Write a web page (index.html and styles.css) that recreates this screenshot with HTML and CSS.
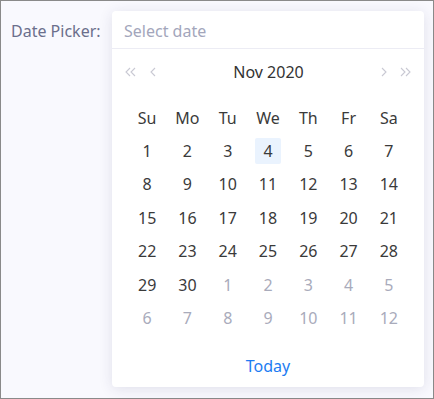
FILE: index.html
```html
<!DOCTYPE html>
<html lang="en">
<head>
  <meta charset="UTF-8">
  <title>Date Picker</title>
  <link rel="stylesheet" href="styles.css">
</head>
<body>
  <div class="frame">
    <label class="field-label">Date Picker:</label>

    <div class="picker">
      <div class="picker-input">Select date</div>

      <div class="picker-header">
        <div class="nav">
          <svg width="12" height="10" viewBox="0 0 12 10"><path d="M5 1 L1 5 L5 9 M10 1 L6 5 L10 9" /></svg>
          <svg width="6" height="10" viewBox="0 0 6 10"><path d="M5 1 L1 5 L5 9" /></svg>
        </div>
        <span class="month">Nov 2020</span>
        <div class="nav">
          <svg width="6" height="10" viewBox="0 0 6 10"><path d="M1 1 L5 5 L1 9" /></svg>
          <svg width="12" height="10" viewBox="0 0 12 10"><path d="M1 1 L5 5 L1 9 M6 1 L10 5 L6 9" /></svg>
        </div>
      </div>

      <div class="days">
        <span class="wd">Su</span><span class="wd">Mo</span><span class="wd">Tu</span><span class="wd">We</span><span class="wd">Th</span><span class="wd">Fr</span><span class="wd">Sa</span>
        <span>1</span><span>2</span><span>3</span><span class="today"><b>4</b></span><span>5</span><span>6</span><span>7</span>
        <span>8</span><span>9</span><span>10</span><span>11</span><span>12</span><span>13</span><span>14</span>
        <span>15</span><span>16</span><span>17</span><span>18</span><span>19</span><span>20</span><span>21</span>
        <span>22</span><span>23</span><span>24</span><span>25</span><span>26</span><span>27</span><span>28</span>
        <span>29</span><span>30</span><span class="other">1</span><span class="other">2</span><span class="other">3</span><span class="other">4</span><span class="other">5</span>
        <span class="other">6</span><span class="other">7</span><span class="other">8</span><span class="other">9</span><span class="other">10</span><span class="other">11</span><span class="other">12</span>
      </div>

      <div class="picker-footer">
        <a class="today-link">Today</a>
      </div>
    </div>
  </div>
</body>
</html>
```

FILE: styles.css
```css
* {
  box-sizing: border-box;
}

body {
  margin: 0;
  font-family: "Noto Sans", "Open Sans", sans-serif;
  font-size: 16px;
  color: #3a3a3a;
}

.frame {
  width: 434px;
  height: 399px;
  border: 1px solid #8a8a8a;
  background: #f9f9fe;
  display: flex;
  align-items: flex-start;
  padding: 10px 0 0 10px;
}

.field-label {
  color: #6b6f8c;
  line-height: 40px;
  width: 101px;
}

.picker {
  width: 312px;
  background: #fff;
  border-radius: 4px;
  box-shadow: 0 2px 14px rgba(40, 40, 90, 0.12);
}

.picker-input {
  height: 38px;
  line-height: 40px;
  padding-left: 12px;
  color: #a3a6bb;
  border-bottom: 1px solid #ececf4;
}

.picker-header {
  display: flex;
  align-items: center;
  justify-content: space-between;
  height: 46px;
  padding: 0 12px 0 13px;
}

.month {
  color: #333;
}

.nav {
  display: flex;
  gap: 13px;
  width: 43px;
}

.nav:last-child {
  justify-content: flex-end;
}

.nav svg path {
  fill: none;
  stroke: #c9c9d3;
  stroke-width: 1.1;
}

.days {
  display: grid;
  grid-template-columns: repeat(7, 1fr);
  grid-auto-rows: 33.4px;
  padding: 6px 15px 0;
}

.days span {
  display: flex;
  align-items: center;
  justify-content: center;
}

.days .wd:first-child ~ .wd,
.days .wd {
  margin-bottom: -1px;
}

.days .other {
  color: #a9abbb;
}

.days .today b {
  font-weight: normal;
  width: 26px;
  height: 26px;
  display: flex;
  align-items: center;
  justify-content: center;
  background: #eaf3fe;
  border-radius: 2px;
}

.picker-footer {
  text-align: center;
  padding: 19px 0 9px;
}

.today-link {
  color: #1d7cf2;
  line-height: 24px;
}
```
